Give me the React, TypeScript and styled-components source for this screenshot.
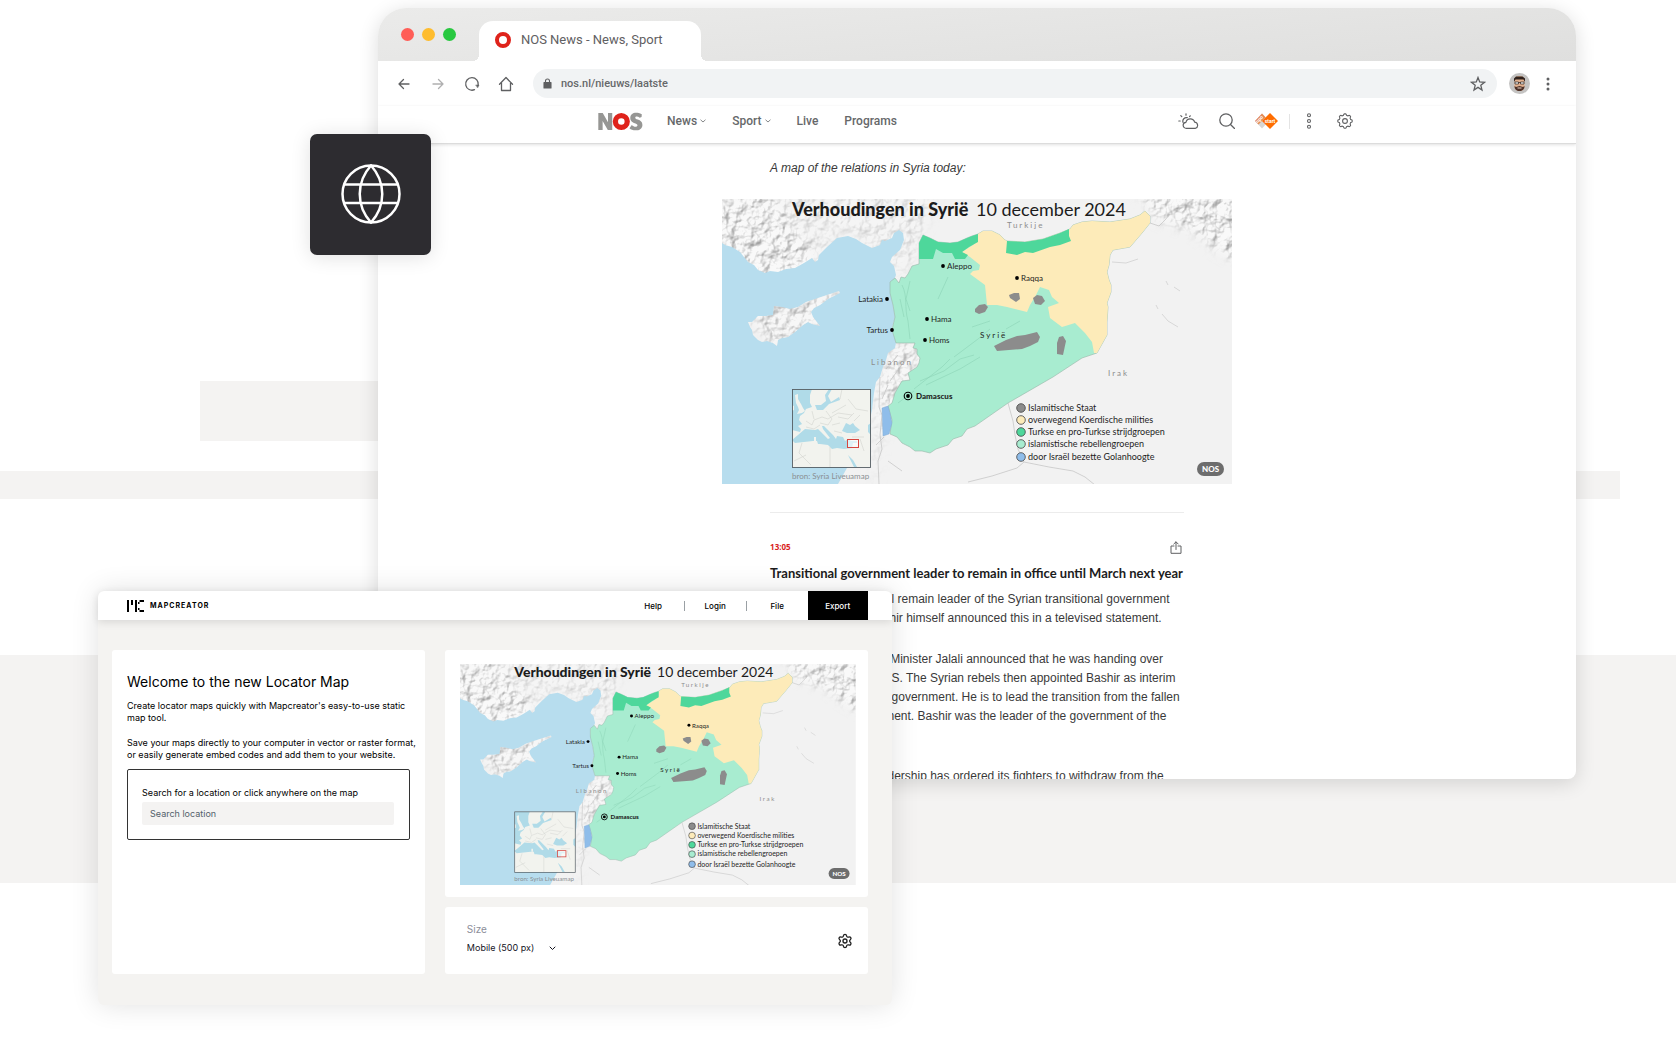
import React, { useId } from 'react';
import styled, { createGlobalStyle } from 'styled-components';
import { Settings } from 'lucide-react';

const GlobalStyle = createGlobalStyle`
  *, *::before, *::after { box-sizing: border-box; }
  body { margin: 0; background: #fff; font-family: Inter, "Liberation Sans", sans-serif; }
  h1, h2, p { margin: 0; }
  button { font: inherit; color: inherit; padding: 0; border: 0; background: none; cursor: pointer; }
  a { color: inherit; text-decoration: none; }
  svg { display: block; flex: none; }
`;

/* ---------- stage ---------- */

const Stage = styled.main`
  position: relative;
  display: grid;
  grid-template-columns: minmax(0, 1fr);
  align-items: start;
  min-height: 100vh;
  overflow: hidden;
`;

const Band = styled.div<{ $top: number; $height: number; $left?: string; $right?: string }>`
  position: absolute;
  top: ${p => p.$top}px;
  height: ${p => p.$height}px;
  left: ${p => p.$left ?? '0'};
  right: ${p => p.$right ?? '0'};
  background: #f4f3f2;
`;

const BrowserWindow = styled.section`
  position: relative;
  grid-area: 1 / 1;
  display: flex;
  flex-direction: column;
  height: 771px;
  margin: 8px 5.95% 0 22.55%;
  border-radius: 28px 28px 8px 8px;
  overflow: hidden;
  background: #fff;
  box-shadow: 0 4px 20px rgba(0, 0, 0, 0.14);
`;

const GlobeTile = styled.div`
  position: relative;
  grid-area: 1 / 1;
  display: grid;
  place-items: center;
  width: 121px;
  height: 121px;
  margin: 134px 0 0 18.5%;
  padding-bottom: 2px;
  border-radius: 7px;
  background: #2d2c30;
  box-shadow: 0 2px 20px rgba(0, 0, 0, 0.12);
`;

const AppWindow = styled.section`
  position: relative;
  grid-area: 1 / 1;
  margin: 591px 46.8% 33px 5.85%;
  border-radius: 6px;
  background: #f4f3f1;
  box-shadow: 0 0 28px rgba(0, 0, 0, 0.12);
`;

/* ---------- browser chrome ---------- */

const TabStrip = styled.header`
  display: flex;
  align-items: flex-end;
  flex: none;
  height: 53px;
  padding-left: 23px;
  background: linear-gradient(175deg, #ebebea, #dfdfde);
`;

const Lights = styled.div`
  display: flex;
  gap: 8px;
  width: 78px;
  padding-bottom: 20px;
`;

const Light = styled.span<{ $color: string }>`
  width: 13px;
  height: 13px;
  border-radius: 50%;
  background: ${p => p.$color};
`;

const Tab = styled.div`
  position: relative;
  display: flex;
  align-items: center;
  gap: 10px;
  width: 222px;
  height: 40px;
  padding: 0 16px 2px;
  border-radius: 14px 14px 0 0;
  background: #fff;
  font: 400 13px/16px Roboto, sans-serif;
  color: #5f6062;

  &::before, &::after {
    content: '';
    position: absolute;
    bottom: 0;
    width: 6px;
    height: 6px;
  }
  &::before { right: 100%; background: radial-gradient(circle at 0 0, transparent 6px, #fff 6px); }
  &::after { left: 100%; background: radial-gradient(circle at 100% 0, transparent 6px, #fff 6px); }
`;

const Ring = styled.span`
  width: 16px;
  height: 16px;
  border: 4px solid #df231b;
  border-radius: 50%;
`;

const Toolbar = styled.div`
  display: flex;
  align-items: center;
  flex: none;
  height: 45px;
  padding: 0 20px 0 18px;
`;

const NavButtons = styled.div`
  display: flex;
  gap: 18px;
  margin-right: 19px;
`;

const IconButton = styled.button`
  display: grid;
  place-items: center;
  min-width: 16px;
  height: 20px;
  color: #5f6062;
`;

const AddressBar = styled.div`
  display: flex;
  align-items: center;
  flex: 1;
  gap: 9px;
  height: 29px;
  padding: 0 11px 0 10px;
  border-radius: 15px;
  background: #f1f3f4;
  color: #5f6062;
`;

const AddressInput = styled.input`
  flex: 1;
  min-width: 0;
  padding: 0;
  border: 0;
  outline: 0;
  background: none;
  font: 500 11px/16px Roboto, sans-serif;
  color: #66686a;
`;

const ToolbarEnd = styled.div`
  display: flex;
  align-items: center;
  gap: 10px;
  margin-left: 12px;
`;

/* ---------- news site ---------- */

const SiteHeader = styled.div`
  flex: none;
  border-bottom: 1px solid #dcdcdc;
  box-shadow: 0 1px 3px rgba(0, 0, 0, 0.12);
`;

const SiteNav = styled.nav`
  display: flex;
  align-items: center;
  max-width: 758px;
  height: 37px;
  margin: 0 auto;
  padding: 0 3px 7px 0;
  color: #66686a;
`;

const SiteLinks = styled.div`
  display: flex;
  gap: 26px;
  flex: 1;
  margin-left: 23px;
`;

const SiteLink = styled.a`
  display: flex;
  align-items: center;
  gap: 3px;
  font: 500 12px/16px Roboto, sans-serif;
`;

const SiteTools = styled.div`
  display: flex;
  align-items: center;
  gap: 20px;
`;

const ToolDivider = styled.span`
  width: 1px;
  height: 15px;
  margin: 0 -9px;
  background: #e4e4e4;
`;

const Article = styled.article`
  width: 414px;
  margin: 0 auto;
  padding-top: 15px;
  font: 400 12px/19px "Liberation Sans", Arial, sans-serif;
  color: #3a3a3a;
`;

const Lead = styled.p`
  font-style: italic;
`;

const MapFigure = styled.figure`
  margin: 21px -48px 28px;
`;

const MapSvg = styled.svg`
  width: 100%;
  height: auto;
`;

const ItemHead = styled.div`
  display: flex;
  align-items: center;
  justify-content: space-between;
  padding: 24px 0 6px;
  border-top: 1px solid #ececec;
`;

const Time = styled.time`
  font: 700 8px/12px "Open Sans", sans-serif;
  color: #d8231c;
`;

const Headline = styled.h2`
  margin-bottom: 7px;
  font: 700 13px/20px Lato, "Open Sans", sans-serif;
  white-space: nowrap;
  color: #1c1c1c;
`;

const Paragraph = styled.p`
  margin-bottom: 22px;
  white-space: pre-line;
`;

/* ---------- locator map app ---------- */

const AppHeader = styled.header`
  position: relative;
  display: flex;
  align-items: center;
  justify-content: space-between;
  height: 29px;
  padding: 0 24px 0 29px;
  border-radius: 6px 6px 0 0;
  background: #fff;
  box-shadow: 0 2px 8px rgba(0, 0, 0, 0.12);
  font-size: 8px;
  font-weight: 500;
`;

const Brand = styled.a`
  display: flex;
  align-items: center;
  gap: 6px;
  font-size: 7px;
  font-weight: 700;
  letter-spacing: 1px;
`;

const AppNav = styled.nav`
  display: flex;
  align-items: center;
  height: 100%;
`;

const AppNavItem = styled.a<{ $rule?: boolean }>`
  min-width: 62px;
  line-height: 10px;
  text-align: center;
  border-left: 1px solid ${p => (p.$rule ? '#9aa0a4' : 'transparent')};
`;

const ExportButton = styled.button`
  width: 60px;
  height: 100%;
  background: #000;
  color: #fff;
`;

const AppBody = styled.div`
  display: grid;
  grid-template-columns: 313fr 423fr;
  gap: 20px;
  padding: 30px 24px 31px 14px;
`;

const Card = styled.div`
  border-radius: 3px;
  background: #fff;
`;

const WelcomeCard = styled(Card)`
  padding: 22px 15px;
  font-size: 9px;
  font-weight: 400;
  line-height: 12px;
  color: #000;
`;

const Title = styled.h1`
  margin-bottom: 8px;
  font-size: 14px;
  font-weight: 400;
  line-height: 20px;
`;

const Copy = styled.p`
  margin: 0 -10px 13px 0;
`;

const SearchBox = styled.form`
  display: grid;
  gap: 3px;
  margin-top: -5px;
  padding: 17px 15px 14px 14px;
  border: 1px solid #333;
  border-radius: 2px;
`;

const SearchInput = styled.input`
  width: 100%;
  height: 23px;
  padding: 0 8px;
  border: 0;
  border-radius: 2px;
  background: #f4f3f2;
  font: 400 9px/12px Inter, sans-serif;
  &::placeholder { color: #535f6b; opacity: 1; }
`;

const RightColumn = styled.div`
  display: grid;
  gap: 10px;
`;

const PreviewCard = styled(Card)`
  padding: 14px 12px 12px 15px;
`;

const SizeCard = styled(Card)`
  display: flex;
  align-items: center;
  justify-content: space-between;
  height: 67px;
  padding: 0 15px 0 22px;
`;

const Field = styled.div`
  display: grid;
  gap: 5px;
  padding-bottom: 4px;
`;

const FieldLabel = styled.label`
  font-size: 10px;
  line-height: 14px;
  color: #8b8e99;
`;

const SelectWrap = styled.div`
  display: flex;
  align-items: center;
  color: #15151f;
`;

const SizeSelect = styled.select`
  appearance: none;
  width: 82px;
  padding: 0;
  border: 0;
  background: none;
  color: inherit;
  font: 400 9px/14px Inter, sans-serif;
`;

/* ---------- icons ---------- */

type GlyphProps = { w: number; h?: number; box?: string; sw?: number; children: React.ReactNode };

const Glyph = ({ w, h = w, box, sw = 1.3, children }: GlyphProps) => (
  <svg width={w} height={h} viewBox={box ?? `0 0 ${w} ${h}`} fill="none" stroke="currentColor"
    strokeWidth={sw} strokeLinecap="round" strokeLinejoin="round" aria-hidden="true">
    {children}
  </svg>
);

const scallop = (lobes: number, outer: number, depth: number, c: number) => {
  const steps = lobes * 12;
  const pts = Array.from({ length: steps }, (_, i) => {
    const a = (i / steps) * Math.PI * 2;
    const r = outer - depth * (0.5 - 0.5 * Math.tanh(2.5 * Math.cos(a * lobes)));
    return `${(c + r * Math.sin(a)).toFixed(2)} ${(c - r * Math.cos(a)).toFixed(2)}`;
  });
  return `M${pts.join('L')}Z`;
};

const Caret = () => (
  <Glyph w={6} h={4} sw={0.8}><path d="M.8 1L3 3l2.200-2" /></Glyph>
);

const NosLogo = () => (
  <svg width="46" height="19" viewBox="0 0 43 18" role="img" aria-label="NOS">
    <g fill="#969694">
      <path d="M0 1h4.2l5 8.6V1h4v16H9L4.1 8.500V17H0z" />
      <path d="M41 4.800L41.200 2.200C39 1.200 37.500.800 36 .800c-3.500 0-5.700 1.900-5.700 4.800 0 3.100 2 4.100 4.300 5 1.800.700 2.500 1 2.500 2 0 .900-.700 1.400-1.800 1.400-1.300 0-2.500-.600-3.600-1.700L29.500 15.400c1.400 1.300 3.300 2 5.700 2 3.900 0 6.600-1.800 6.600-5.200 0-2.900-1.800-4-4.400-5-1.800-.700-2.400-1-2.400-1.800 0-.700.500-1.100 1.400-1.100.900 0 1.900.400 2.900 1.200z" />
    </g>
    <circle cx="21.800" cy="9" r="5.600" fill="none" stroke="#df231b" strokeWidth="5" />
  </svg>
);

const NpoStart = () => (
  <svg width="23" height="16" viewBox="0 0 23 16" aria-hidden="true">
    <path d="M7 .5L14 8 7 15.500 0 8z" fill="#d8d6d4" />
    <path d="M0 8L7 .5 10.500 4.200 3.500 11.500z" fill="#e58a55" />
    <path d="M15 0L23 8l-8 8L7 8z" fill="#ff6d00" />
    <text x="15" y="9.500" fontSize="5" fontWeight="700" textAnchor="middle" fill="#fff" fontFamily="Roboto, sans-serif">start</text>
    <text x="1" y="9.500" fontSize="5" fontWeight="700" fill="#fff" fontFamily="Roboto, sans-serif" transform="rotate(-45 3 8)">npo</text>
  </svg>
);

const Avatar = () => (
  <svg width="21" height="21" viewBox="0 0 21 21" role="img" aria-label="Profile">
    <circle cx="10.500" cy="10.500" r="10.500" fill="#c4c3c2" />
    <path d="M5.500 7c0-3 2-4 5-4s5 1 5 4v6c0 3-2 5-5 5s-5-2-5-5z" fill="#e3b18f" />
    <path d="M5 9V5.500L7 3.500h6.500l2.500 2V9l-1.500-2.500h-8z" fill="#30221d" />
    <path d="M5.500 13l1.500 1 3.500-1 3.500 1 1.500-1c0 3.500-2 5-5 5s-5-1.500-5-5z" fill="#4d3128" />
    <path d="M8.500 15h4" stroke="#e9d3c5" strokeWidth="1" />
    <path d="M6 9h3.500v2H6zM11.500 9H15v2h-3.500zM9.500 9.500h2" fill="#fff" stroke="#26201e" strokeWidth=".7" />
  </svg>
);

const MapcreatorMark = () => (
  <svg width="17" height="12" viewBox="0 0 17 12" aria-hidden="true">
    <path d="M0 0h2v12H0zM4 0h2v5H4zM8 0h2v12H8zM12.500 0H17v2h-4.500zM12.500 10H17v2h-4.500zM11 2h1.500v2H11zM11 8h1.500v2H11z" fill="#000" />
  </svg>
);

/* ---------- map ---------- */

const SEA = '0,44 3,46 10,48 18,53 22,58 26,63 32,66 36,71 43,74 48,72 56,73 64,70 73,69 82,64 90,59 93,63 96,61 97,56 105,48 115,39 126,37 134,40 140,44 150,49 158,46 160,41 163,42 170,39 172,34 177,31 181,34 182,41 178,51 170,58 168,63 172,67 174,76 172,81 168,83 168,90 169,94 171,106 173,118 170,129 172,137 174,144 173,149 166,154 164,161 161,168 158,178 154,183 152,194 150,211 146,230 144,246 140,254 132,263 125,269 116,285 0,285';
const CYPRUS = '26,123 30,123 36,117 44,117 51,116 52,107 60,108 68,110 76,108 84,103 93,100 105,96 117,92 118,94 106,100 98,106 92,109 89,113 91,118 94,122 98,127 90,125 86,123 81,126 73,133 66,138 60,139 56,141 55,147 51,144 45,142 40,143 36,141 31,136 30,131 28,128';
const SYRIA = '173,79 177,84 179,78 183,79 186,75 190,67 197,65 197,44 201,36 208,39 216,43 228,44 236,43 245,39 250,37 256,35 261,32 270,32 278,36 283,41 285,42 303,43 321,40 338,34 348,30 351,26 360,23 370,22 388,23 408,20 418,16 423,12 428,17 428,24 420,34 408,48 391,51 388,56 387,66 385,73 387,81 389,86 389,93 385,104 386,108 385,123 385,136 380,145 375,154 360,159 331,178 286,204 253,227 245,230 240,237 231,240 226,246 220,248 214,250 208,254 200,252 193,252 188,248 180,244 175,238 168,235 170,221 166,207 170,204 173,194 177,187 180,182 188,181 186,174 195,168 197,164 198,159 195,155 195,150 191,149 193,144 174,144 170,131 173,118 171,106 168,94 168,83';
const KURDISH = '256,35 261,32 270,32 278,36 283,41 285,42 303,43 321,40 338,34 348,30 351,26 360,23 370,22 388,23 408,20 418,16 423,12 428,17 428,24 420,34 408,48 391,51 388,56 387,66 385,73 387,81 389,86 389,93 385,104 386,108 385,123 385,136 380,145 375,154 372,154 370,143 363,134 353,124 340,128 328,119 326,108 337,104 330,98 327,91 318,88 314,96 308,106 305,113 285,108 275,106 265,106 263,86 248,75 251,72 257,71 258,66 248,58 240,53 251,46 256,41';
const TURKISH_WEST = '197,60 197,44 201,36 208,39 216,43 228,44 236,43 245,39 250,37 256,35 256,43 247,48 240,53 246,56 243,60 233,60 230,54 221,54 214,50 211,60';
const TURKISH_EAST = '285,42 303,43 321,40 338,34 347,30 347,37 349,42 338,46 328,48 311,54 303,53 295,56 284,54';

const CITIES = [
  { name: 'Aleppo', x: 221, y: 67 }, { name: 'Hama', x: 205, y: 120 }, { name: 'Homs', x: 203, y: 141 },
  { name: 'Raqqa', x: 295, y: 79 }, { name: 'Latakia', x: 165, y: 100, left: true }, { name: 'Tartus', x: 170, y: 131, left: true },
];
const LEGEND = [
  { y: 209, color: '#8c8c8c', text: 'Islamitische Staat' },
  { y: 221, color: '#fdebb9', text: 'overwegend Koerdische milities' },
  { y: 233, color: '#4ed79b', text: 'Turkse en pro-Turkse strijdgroepen' },
  { y: 245, color: '#a8ecd0', text: 'islamistische rebellengroepen' },
  { y: 258, color: '#8fbdea', text: 'door Israël bezette Golanhoogte' },
];

const SyriaMap = () => {
  const id = useId().replace(/[^a-zA-Z0-9]/g, '');
  return (
    <MapSvg viewBox="0 0 510 285" role="img" aria-label="Verhoudingen in Syrië" fontFamily="Lato, 'Open Sans', sans-serif">
      <defs>
        <filter id={`${id}relief`} x="0" y="0" width="510" height="285" filterUnits="userSpaceOnUse" colorInterpolationFilters="sRGB">
          <feTurbulence type="fractalNoise" baseFrequency="0.09" numOctaves="4" seed="7" result="n" />
          <feDiffuseLighting in="n" surfaceScale="4" diffuseConstant="1.130" lightingColor="#f3f3f3" result="l">
            <feDistantLight azimuth="225" elevation="62" />
          </feDiffuseLighting>
          <feComposite in="l" in2="SourceGraphic" operator="in" />
        </filter>
        <filter id={`${id}soft`}><feGaussianBlur stdDeviation="6" /></filter>
        <mask id={`${id}hills`}>
          <g fill="#fff" filter={`url(#${id}soft)`}>
            <path d="M-20 20L30-20 60 10 80 40 92 66 40 90-20 50z" />
            <path d="M30-20H215L205 20 190 60 172 84 168 60 150 50 122 28 92 66 60 40z" opacity=".45" />
            <path d="M410-20H540V75L495 50 470 30 435 20z" />
            <path d="M20 110L120 88 100 130 50 150z" />
            <path d="M176 140L202 152 180 190 158 240 150 300 158 180z" opacity=".8" />
          </g>
        </mask>
        <clipPath id={`${id}inset`}><rect x="70" y="190" width="79" height="78" /></clipPath>
      </defs>

      <rect width="510" height="285" fill="#f2f2f2" />
      <g mask={`url(#${id}hills)`}><rect width="510" height="285" filter={`url(#${id}relief)`} opacity=".55" /></g>
      <polygon points={SEA} fill="#b7ddee" />
      <polygon points={CYPRUS} fill="#f0f0f0" />
      <g mask={`url(#${id}hills)`}><polygon points={CYPRUS} filter={`url(#${id}relief)`} opacity=".45" /></g>

      <g fill="none" stroke="#c2c2c2" strokeWidth=".7">
        <path d="M286 204l5 18 2 14 3 14 6 13-7 6-25 8-24 6M302 263l25 5 24 4 12 6 10 8" />
        <path d="M428 24l9 3 6-6 5-6M158 178l-1 30 3 8-2 20 2 14-4 12 1 23" />
        <path d="M390 63l14 1 12-4M444 82l2 4M452 88l6 4M434 106l2 4M440 115l6 7 10 6" opacity=".8" />
        <path d="M160 200l6-14M164 170l12-14M168 182l16-22M154 246l8-8M166 262l14 10" />
      </g>

      <polygon points={SYRIA} fill="#a8ecd0" stroke="#98b5a8" strokeWidth=".6" />
      <g fill="none" stroke="#78c2a4" strokeWidth=".6" opacity=".6">
        <path d="M180 86c6 12 2 22 6 36l2 18M188 82l-4 18 4 12M178 100l4 18" />
        <path d="M198 182l24-10 16-12 14-4M192 190l28-22 8-8M204 186l34-16 20-12M232 158l24-18 12-10M250 128l18-6M176 204l16-12M226 78l-10 22M284 130l14-8" />
      </g>
      <polygon points={KURDISH} fill="#fdebb9" />
      <g fill="#4ed79b"><polygon points={TURKISH_WEST} /><polygon points={TURKISH_EAST} /></g>
      <polygon points="160,209 166,207 168,214 170,224 167,235 161,237" fill="#8fbdea" stroke="#7ba6cf" strokeWidth=".4" />
      <g fill="#8c8c8c">
        <polygon points="287,96 292,94 297,94 298,100 294,103 288,99" />
        <polygon points="311,99 315,96 320,97 323,102 319,106 313,105" />
        <polygon points="253,110 257,106 263,105 266,108 263,113 257,115 253,113" />
        <polygon points="272,147 284,141 295,137 303,136 315,133 318,138 316,143 308,147 300,150 275,152" />
        <polygon points="337,138 341,137 344,142 341,156 335,155 335,144" />
      </g>

      <text x="70" y="17" fontSize="18" fontWeight="900" fill="#1c1c1c">Verhoudingen in Syrië</text>
      <text x="254" y="17" fontSize="18" fill="#1c1c1c">10 december 2024</text>

      <g fontSize="8" fill="#8d8d8d" letterSpacing="2">
        <text x="285" y="29">Turkije</text>
        <text x="149" y="166">Libanon</text>
        <text x="386" y="177">Irak</text>
        <text x="258" y="139" fill="#222">Syrië</text>
      </g>

      <g fill="#1f1f1f">
        {CITIES.map(c => (
          <g key={c.name}>
            <circle cx={c.x} cy={c.y} r="1.900" fill="#000" />
            <text x={c.left ? c.x - 4 : c.x + 4} y={c.y + 3} fontSize="8" textAnchor={c.left ? 'end' : 'start'}>{c.name}</text>
          </g>
        ))}
        <circle cx="186" cy="197" r="3.800" fill="none" stroke="#000" strokeWidth="1.100" />
        <circle cx="186" cy="197" r="1.900" fill="#000" />
        <text x="194" y="200" fontSize="8" fontWeight="900">Damascus</text>
        {LEGEND.map(l => (
          <g key={l.text}>
            <circle cx="299" cy={l.y} r="4.300" fill={l.color} stroke="#444" strokeWidth=".8" />
            <text x="306" y={l.y + 3} fontSize="9">{l.text}</text>
          </g>
        ))}
      </g>

      <g clipPath={`url(#${id}inset)`}>
        <rect x="70" y="190" width="79" height="78" fill="#f2f3ee" />
        <g fill="#b0dbe8">
          <path d="M70 190h20l-2 6 0 8 2 4-6 2-2 4-4 3-1 4 3 4-4 2 3 3-1 3-8-2z" />
          <path d="M107 190l3 0-4 7 3 6 8-5 1 3-11 4-6 6-6 0-2-5 6 0 5-4-1-6z" />
          <path d="M70 241l6-5 7-6 10 1 3-1 3 3 7 7 2-1-7-9-1-3 2 0 9 9 3 4 1-3 6 1 2 4 3-2 3 2 6 0 0 2-4 0-1 5-8 1-7-1-5 1-4-4-8-1-2 0-1-3-4 0-18 2z" />
          <path d="M120 232l4-8 4 2 3-2 2 3 5 4-5 3-8 0zM146 226l3-2v12l-3-3zM126 256l5 5 4 7h-3z" />
        </g>
        <path d="M73 196l3-1 0 5 3 5 2 4 2 3-3 2-5 1 2-4-1-3-2-4zM70 206l2 1 0 4-2 1zM92 238l2 0 0 4-2 0z" fill="#f2f3ee" />
        <path d="M84 222l6 4 2-5 8-3 6 2 10-6 14 2M90 212l2 8M104 212l6 8-4 6-8-2M110 214l14-8M116 218l10 2 6-6M84 228l8 2 6-4M110 226l8-2M112 232l8 2M80 244l-3 10 12 12M108 248v20M130 238l12 0M138 240l4 12M72 262l12-6M126 200l8 10 12 2M120 190l-2 10M132 222l6-6" fill="none" stroke="#d2d3cf" strokeWidth=".6" />
      </g>
      <rect x="70.500" y="190.500" width="78" height="78" fill="none" stroke="#555e64" strokeWidth=".9" />
      <rect x="125.500" y="240.500" width="11" height="8" fill="#fff" fillOpacity=".6" stroke="#d6463f" strokeWidth="1" />
      <text x="70" y="280" fontSize="8" fill="#8a8f92">bron: Syria Liveuamap</text>

      <rect x="475" y="263" width="27" height="14" rx="7" fill="#6d6d6d" />
      <text x="488.500" y="273" fontSize="8" fontWeight="900" textAnchor="middle" fill="#fff">NOS</text>
    </MapSvg>
  );
};

/* ---------- page ---------- */

const Browser = () => (
  <BrowserWindow>
    <TabStrip>
      <Lights><Light $color="#ff5e57" /><Light $color="#febc2e" /><Light $color="#28c840" /></Lights>
      <Tab><Ring />NOS News - News, Sport</Tab>
    </TabStrip>
    <Toolbar>
      <NavButtons>
        <IconButton aria-label="Back"><Glyph w={16}><path d="M13 8H3M7.500 3.500L3 8l4.500 4.500" /></Glyph></IconButton>
        <IconButton aria-label="Forward"><Glyph w={16}><path d="M3 8h10M8.500 3.500L13 8l-4.500 4.500" opacity=".5" /></Glyph></IconButton>
        <IconButton aria-label="Reload"><Glyph w={16}><path d="M10.500 13.700A6.300 6.300 0 1 1 14.200 9" /><path d="M12 9h3l-1.200 2.600z" fill="currentColor" strokeWidth=".5" /></Glyph></IconButton>
        <IconButton aria-label="Home"><Glyph w={16}><path d="M1.500 8.300L8 1.500l6.500 6.800M3.500 7v7.500h9V7" /></Glyph></IconButton>
      </NavButtons>
      <AddressBar>
        <Glyph w={9} h={11} sw={1.1}><rect x="1" y="4.500" width="7" height="5.500" fill="currentColor" /><path d="M2.500 4.500V3a2 2 0 0 1 4 0v1.500" /></Glyph>
        <AddressInput aria-label="Address" defaultValue="nos.nl/nieuws/laatste" />
        <IconButton aria-label="Bookmark"><Glyph w={16}><path d="M8 1.500l1.700 4.500 4.800.3-3.700 3 1.200 4.700L8 11.400 4 14l1.200-4.700-3.700-3 4.800-.3z" strokeLinejoin="miter" /></Glyph></IconButton>
      </AddressBar>
      <ToolbarEnd>
        <Avatar />
        <IconButton aria-label="Menu"><Glyph w={4} h={14} sw={0}><g fill="currentColor"><circle cx="2" cy="2" r="1.500" /><circle cx="2" cy="7" r="1.500" /><circle cx="2" cy="12" r="1.500" /></g></Glyph></IconButton>
      </ToolbarEnd>
    </Toolbar>
    <SiteHeader>
      <SiteNav>
        <a href="#home"><NosLogo /></a>
        <SiteLinks>
          <SiteLink href="#news">News<Caret /></SiteLink>
          <SiteLink href="#sport">Sport<Caret /></SiteLink>
          <SiteLink href="#live">Live</SiteLink>
          <SiteLink href="#programs">Programs</SiteLink>
        </SiteLinks>
        <SiteTools>
          <IconButton aria-label="Weather">
            <Glyph w={21} h={16} sw={1.2}><path d="M8.500 15.300a3 3 0 0 1-.6-6 4.500 4.500 0 0 1 8.700-.2 3.200 3.200 0 0 1 .9 6.200zM5 9.300a3.600 3.600 0 0 1 4.300-4.600M8 .8v1.400M2.800 2.600l1 1M.8 8h1.400M12.200 2.800l-.6.8" /></Glyph>
          </IconButton>
          <IconButton aria-label="Search"><Glyph w={16}><circle cx="7" cy="7" r="6.200" /><path d="M11.500 11.500l4 4" /></Glyph></IconButton>
          <IconButton aria-label="NPO Start"><NpoStart /></IconButton>
          <ToolDivider />
          <IconButton aria-label="More"><Glyph w={6} h={16} sw={1.1}><circle cx="3" cy="2.300" r="1.500" /><circle cx="3" cy="8" r="1.500" /><circle cx="3" cy="13.700" r="1.500" /></Glyph></IconButton>
          <IconButton aria-label="Settings"><Glyph w={16} sw={1.1}><path d={scallop(8, 7.2, 1.4, 8)} /><circle cx="8" cy="8" r="2.400" /></Glyph></IconButton>
        </SiteTools>
      </SiteNav>
    </SiteHeader>
    <Article>
      <Lead>A map of the relations in Syria today:</Lead>
      <MapFigure><SyriaMap /></MapFigure>
      <ItemHead>
        <Time>13:05</Time>
        <IconButton aria-label="Share"><Glyph w={12} h={13} sw={1}><path d="M4 5H1v7.300h10V5H8M6 8.500V1M3.800 3L6 .8 8.200 3" /></Glyph></IconButton>
      </ItemHead>
      <Headline>Transitional government leader to remain in office until March next year</Headline>
      <Paragraph>{'Mohamed al-Bashir will remain leader of the Syrian transitional government\nuntil March, 2025. Bashir himself announced this in a televised statement.'}</Paragraph>
      <Paragraph>{'Yesterday, then Prime Minister Jalali announced that he was handing over\npower to the rebels HTS. The Syrian rebels then appointed Bashir as interim\nleaders of the national government. He is to lead the transition from the fallen\nBashar Assad government. Bashir was the leader of the government of the\nregion.'}</Paragraph>
      <Paragraph>{'The entire Kurdish leadership has ordered its fighters to withdraw from the'}</Paragraph>
    </Article>
  </BrowserWindow>
);

const LocatorApp = () => (
  <AppWindow>
    <AppHeader>
      <Brand href="#mapcreator"><MapcreatorMark />MAPCREATOR</Brand>
      <AppNav>
        <AppNavItem href="#help">Help</AppNavItem>
        <AppNavItem href="#login" $rule>Login</AppNavItem>
        <AppNavItem href="#file" $rule>File</AppNavItem>
        <ExportButton>Export</ExportButton>
      </AppNav>
    </AppHeader>
    <AppBody>
      <WelcomeCard>
        <Title>Welcome to the new Locator Map</Title>
        <Copy>Create locator maps quickly with Mapcreator's easy-to-use static<br />map tool.</Copy>
        <Copy>Save your maps directly to your computer in vector or raster format, or easily generate embed codes and add them to your website.</Copy>
        <SearchBox>
          <label htmlFor="location">Search for a location or click anywhere on the map</label>
          <SearchInput id="location" placeholder="Search location" />
        </SearchBox>
      </WelcomeCard>
      <RightColumn>
        <PreviewCard><SyriaMap /></PreviewCard>
        <SizeCard>
          <Field>
            <FieldLabel htmlFor="size">Size</FieldLabel>
            <SelectWrap>
              <SizeSelect id="size" defaultValue="500"><option value="500">Mobile (500 px)</option></SizeSelect>
              <Glyph w={7} h={5} sw={1}><path d="M1 1l2.500 2.500L6 1" /></Glyph>
            </SelectWrap>
          </Field>
          <IconButton aria-label="Map settings"><Settings size={16} strokeWidth={2} color="#222" /></IconButton>
        </SizeCard>
      </RightColumn>
    </AppBody>
  </AppWindow>
);

export default function App() {
  return (
    <>
      <GlobalStyle />
      <Stage>
        <Band $top={381} $height={60} $left="11.95%" $right="60%" />
        <Band $top={471} $height={28} $right="3.35%" />
        <Band $top={655} $height={228} />
        <Browser />
        <GlobeTile>
          <svg width="60" height="60" viewBox="0 0 60 60" fill="none" stroke="#fff" strokeWidth="2.500" role="img" aria-label="Globe">
            <circle cx="30" cy="30" r="28.500" />
            <path d="M30 1.500C15 18 15 42 30 58.500C45 42 45 18 30 1.500zM3.500 20.500h53M3.500 39h53" />
          </svg>
        </GlobeTile>
        <LocatorApp />
      </Stage>
    </>
  );
}
